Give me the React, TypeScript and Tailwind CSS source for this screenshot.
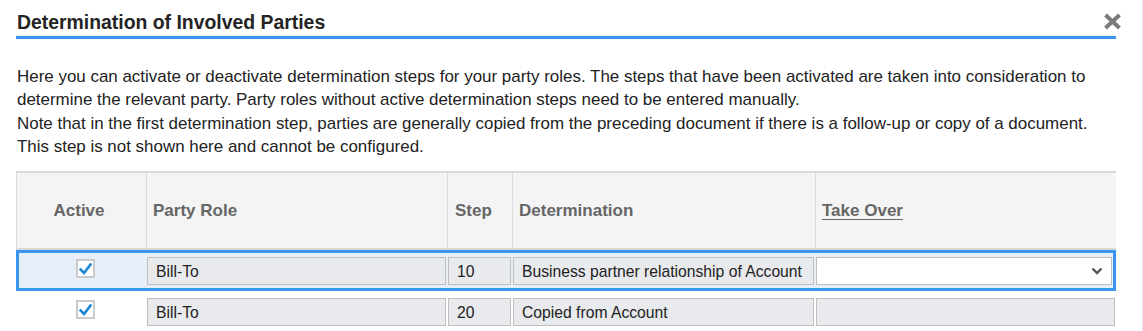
import React from "react";

const cols = "grid grid-cols-[130px_301px_65px_303px_301px]";

function Check() {
  return (
    <div className="w-[19px] h-[19px] border-2 border-[#cacaca] bg-white flex items-center justify-center">
      <svg width="13" height="12" viewBox="0 0 13 12">
        <path d="M1.5 6.5 L5 10 L11.5 1.5" fill="none" stroke="#1e88d8" strokeWidth="2.6" strokeLinecap="square" />
      </svg>
    </div>
  );
}

function Field({ text }: { text: string }) {
  return (
    <div className="mx-[1px] h-[28px] border border-[#bfbfbf] bg-[#e8eaed] pl-[8px] flex items-center text-[15.7px] text-[#222] whitespace-nowrap overflow-hidden">
      {text}
    </div>
  );
}

function Row({ step, det, selected }: { step: string; det: string; selected?: boolean }) {
  return (
    <div
      className={`${cols} h-[41px] pt-[7px] ${
        selected ? "bg-[#e6eef8] shadow-[inset_0_0_0_3px_#3896ee]" : "bg-white"
      }`}
    >
      <div className="pl-[60px] pt-[2px]">
        <Check />
      </div>
      <Field text="Bill-To" />
      <Field text={step} />
      <Field text={det} />
      {selected ? (
        <div className="ml-[1px] mr-[4px] h-[28px] border border-[#bfbfbf] bg-white flex items-center justify-end pr-[8px]">
          <svg width="12" height="8" viewBox="0 0 12 8">
            <path d="M1.5 1.5 L6 6 L10.5 1.5" fill="none" stroke="#555" strokeWidth="2.4" />
          </svg>
        </div>
      ) : (
        <div className="mx-[1px] h-[28px] border border-[#bfbfbf] bg-[#e8eaed]" />
      )}
    </div>
  );
}

export default function App() {
  return (
    <div
      className="w-[1143px] h-[331px] overflow-hidden bg-white border-r border-[#e4e4e4] pl-[16px]"
      style={{ fontFamily: '"Liberation Sans", Arial, sans-serif' }}
    >
      <div className="flex items-start">
        <div className="w-[1100px] pt-[11px] pb-[3px] border-b-[3px] border-[#3896ee]">
          <h1 className="text-[19.4px] leading-[22px] font-bold text-[#242424] pl-[1px]">
            Determination of Involved Parties
          </h1>
        </div>
        <button className="-ml-[14px] mt-[12px] w-[20px] h-[18px] flex items-center justify-center">
          <svg width="19" height="17" viewBox="0 0 19 17">
            <path d="M2.5 2 L16.5 15 M16.5 2 L2.5 15" stroke="#7a7a7a" strokeWidth="4" strokeLinecap="butt" />
          </svg>
        </button>
      </div>

      <div className="mt-[26px] w-[1099px] pl-[1px] text-[16.95px] leading-[23.33px] text-[#222]">
        <p>
          Here you can activate or deactivate determination steps for your party roles. The steps that have been
          activated are taken into consideration to
          <br />
          determine the relevant party. Party roles without active determination steps need to be entered manually.
        </p>
        <p>
          Note that in the first determination step, parties are generally copied from the preceding document if
          there is a follow-up or copy of a document.
          <br />
          This step is not shown here and cannot be configured.
        </p>
      </div>

      <div className="mt-[13px] w-[1100px]">
        <div
          className={`${cols} h-[79px] bg-[#f4f4f4] border-t-2 border-b-2 border-[#d9d9d9] text-[17px] font-bold text-[#666]`}
        >
          <div className="border-l border-[#dcdcdc] flex items-center justify-center pr-[5px]">Active</div>
          <div className="border-l border-[#dcdcdc] flex items-center pl-[6px]">Party Role</div>
          <div className="border-l border-[#dcdcdc] flex items-center pl-[7px]">Step</div>
          <div className="border-l border-[#dcdcdc] flex items-center pl-[6px]">Determination</div>
          <div className="border-l border-[#dcdcdc] flex items-center pl-[6px]">
            <span className="underline underline-offset-[3px]">Take Over</span>
          </div>
        </div>
        <Row step="10" det="Business partner relationship of Account" selected />
        <Row step="20" det="Copied from Account" />
      </div>
    </div>
  );
}
